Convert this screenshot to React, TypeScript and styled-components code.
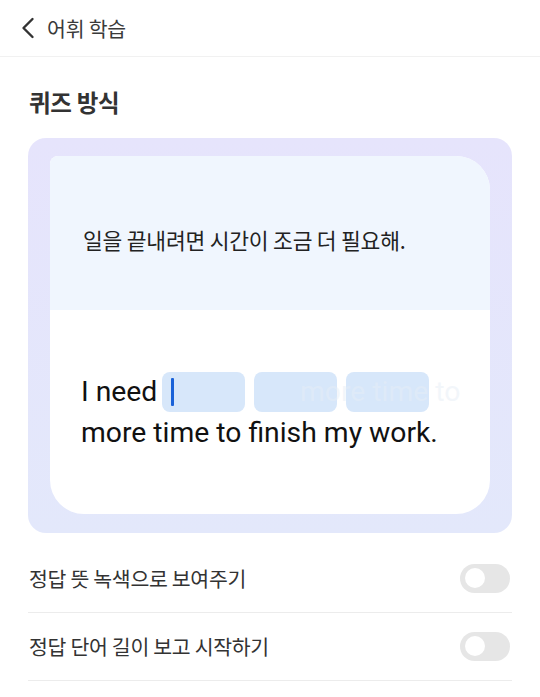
import React from "react";
import styled, { createGlobalStyle } from "styled-components";

const Global = createGlobalStyle`
  html, body { margin: 0; padding: 0; background: #ffffff; }
  body { font-family: "Noto Sans CJK KR", "Noto Sans", sans-serif; -webkit-font-smoothing: antialiased; }
  * { box-sizing: border-box; }
`;

const Page = styled.div`
  width: 540px;
  min-height: 697px;
  background: #fff;
`;

const Header = styled.header`
  height: 57px;
  display: flex;
  align-items: center;
  padding-left: 18px;
  gap: 9px;
  border-bottom: 1px solid #f1f1f1;
`;

const BackButton = styled.button`
  border: 0;
  background: none;
  padding: 0;
  width: 20px;
  height: 24px;
  display: flex;
  align-items: center;
  justify-content: center;
  color: #333;
`;

const HeaderTitle = styled.h1`
  margin: 0;
  font-size: 20.5px;
  font-weight: 400;
  color: #3a3a3a;
  letter-spacing: -0.2px;
`;

const SectionTitle = styled.h2`
  margin: 0;
  padding: 28px 0 0 29px;
  height: 81px;
  font-size: 23.5px;
  line-height: 34px;
  font-weight: 700;
  color: #333;
  letter-spacing: -0.3px;
`;

const QuizFrame = styled.div`
  margin: 0 28px;
  padding: 18px 22px 19px;
  border-radius: 18px;
  background: linear-gradient(180deg, #e6e4fc 0%, #e3e8fb 100%);
`;

const QuizCard = styled.div`
  border-radius: 8px 34px 34px 34px;
  overflow: hidden;
  background: #fff;
  display: flex;
  flex-direction: column;
`;

const Prompt = styled.div`
  height: 154px;
  background: #f0f6fe;
  padding: 68px 0 0 33px;
  font-size: 21.5px;
  color: #222;
  letter-spacing: -0.2px;
  line-height: 32px;
`;

const Answer = styled.div`
  height: 204px;
  display: flex;
  flex-direction: column;
  justify-content: center;
  padding: 0 0 2px 31px;
  font-family: Roboto, "Noto Sans", sans-serif;
  font-size: 28.3px;
  color: #111;
`;

const FirstLine = styled.div`
  position: relative;
  display: flex;
  align-items: center;
  height: 40px;
`;

const Word = styled.span`
  margin-right: 5px;
  line-height: 40px;
`;

const Blank = styled.span<{ $last?: boolean }>`
  position: relative;
  width: 83px;
  height: 40px;
  border-radius: 8px;
  background: #d7e7fa;
  margin-right: ${(p) => (p.$last ? 0 : 9)}px;
  display: flex;
  align-items: center;
`;

const Caret = styled.span`
  width: 3px;
  height: 28px;
  margin-left: 9px;
  background: #1a62d8;
  border-radius: 1px;
`;

const Ghost = styled.span`
  position: absolute;
  left: 219px;
  top: 0;
  line-height: 40px;
  color: rgba(230, 237, 246, 0.5);
  pointer-events: none;
  white-space: nowrap;
`;

const SecondLine = styled.div`
  margin-top: 4px;
  line-height: 34px;
`;

const Options = styled.div`
  margin: 12px 28px 0;
`;

const OptionRow = styled.div`
  height: 68px;
  display: flex;
  align-items: center;
  justify-content: space-between;
  padding: 0 2px 1px 1px;
  border-bottom: 1px solid #ececec;
`;

const OptionLabel = styled.span`
  font-size: 20.5px;
  color: #333;
  letter-spacing: -0.3px;
`;

const Toggle = styled.span`
  width: 50px;
  height: 29px;
  border-radius: 15px;
  background: #e6e6e6;
  display: flex;
  align-items: center;
  padding-left: 5px;
`;

const Knob = styled.span`
  width: 20px;
  height: 20px;
  border-radius: 50%;
  background: #fff;
`;

const options = ["정답 뜻 녹색으로 보여주기", "정답 단어 길이 보고 시작하기"];

export default function App() {
  return (
    <Page>
      <Global />
      <Header>
        <BackButton aria-label="뒤로">
          <svg width="16" height="22" viewBox="0 0 16 22" fill="none">
            <path d="M12.5 2 L3.5 11 L12.5 20" stroke="#333" strokeWidth="2.4" strokeLinecap="round" strokeLinejoin="round" />
          </svg>
        </BackButton>
        <HeaderTitle>어휘 학습</HeaderTitle>
      </Header>
      <SectionTitle>퀴즈 방식</SectionTitle>
      <QuizFrame>
        <QuizCard>
          <Prompt>일을 끝내려면 시간이 조금 더 필요해.</Prompt>
          <Answer>
            <FirstLine>
              <Word>I need</Word>
              <Blank>
                <Caret />
              </Blank>
              <Blank />
              <Blank $last />
              <Ghost>more time to</Ghost>
            </FirstLine>
            <SecondLine>more time to finish my work.</SecondLine>
          </Answer>
        </QuizCard>
      </QuizFrame>
      <Options>
        {options.map((o) => (
          <OptionRow key={o}>
            <OptionLabel>{o}</OptionLabel>
            <Toggle>
              <Knob />
            </Toggle>
          </OptionRow>
        ))}
      </Options>
    </Page>
  );
}
